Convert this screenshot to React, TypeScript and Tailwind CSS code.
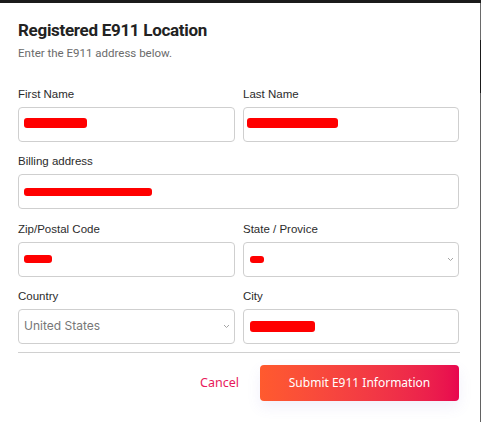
import { ReactNode } from "react";

function Blob({ w, h = 9 }: { w: number; h?: number }) {
  return (
    <span
      className="inline-block rounded-[3px] bg-[#ff0000]"
      style={{ width: w, height: h }}
    />
  );
}

function Chevron() {
  return (
    <svg width="7" height="5" viewBox="0 0 7 5" className="ml-auto shrink-0">
      <path d="M1 1l2.5 2.5L6 1" fill="none" stroke="#9a9a9a" strokeWidth="0.9" />
    </svg>
  );
}

function Field({ label, children, className = "" }: { label: string; children: ReactNode; className?: string }) {
  return (
    <div className={`flex flex-col ${className}`}>
      <label className="text-[11.5px] leading-4 text-[#2b2b2b] font-['Liberation_Sans',Arial,sans-serif]">
        {label}
      </label>
      <div className="mt-[5px] flex h-[35px] items-center rounded-[4px] border border-[#cfcfcf] bg-white pl-[5px] pr-[4px]">
        {children}
      </div>
    </div>
  );
}

export default function App() {
  return (
    <div className="flex h-[422px] w-[481px] flex-col overflow-hidden bg-white">
      <div className="h-[3px] shrink-0 bg-[#1b1b1b]" />
      <div className="flex flex-1">
        <div className="flex-1 pl-[18px] pr-[20px] pt-[15px]">
          <h1 className="text-[17px] leading-6 font-bold text-[#222] font-['Roboto',sans-serif] tracking-[-0.3px]">
            Registered E911 Location
          </h1>
          <p className="mt-[3px] text-[11.5px] leading-4 text-[#6b6b6b] font-['Roboto',sans-serif]">
            Enter the E911 address below.
          </p>

          <div className="mt-[25px] grid grid-cols-[217px_216px] gap-x-[8px] gap-y-[11.33px]">
            <Field label="First Name">
              <span className="-mt-[4px] flex">
                <Blob w={63} h={10} />
              </span>
            </Field>
            <Field label="Last Name">
              <span className="-ml-[2px] -mt-[3px] flex">
                <Blob w={91} h={10} />
              </span>
            </Field>
            <Field label="Billing address" className="col-span-2">
              <span className="flex">
                <Blob w={128} h={8} />
              </span>
            </Field>
            <Field label="Zip/Postal Code">
              <span className="flex">
                <Blob w={28} h={8} />
              </span>
            </Field>
            <Field label="State / Provice">
              <span className="ml-[1px] flex">
                <Blob w={14} h={7} />
              </span>
              <Chevron />
            </Field>
            <Field label="Country">
              <span className="text-[12px] text-[#777] font-['Inter',sans-serif]">United States</span>
              <Chevron />
            </Field>
            <Field label="City">
              <span className="ml-[1px] flex">
                <Blob w={65} h={11} />
              </span>
            </Field>
          </div>

          <div className="mt-[8px] h-px w-[442px] bg-[#d0d0d0]" />

          <div className="mt-[12px] flex w-[441px] items-center justify-end">
            <button className="mr-[21px] text-[12.5px] text-[#e8195a] font-['Noto_Sans',sans-serif]">
              Cancel
            </button>
            <button className="h-[36px] w-[199px] rounded-[4px] bg-gradient-to-r from-[#ff5a2e] to-[#e8064f] text-[12px] text-white font-['Noto_Sans',sans-serif] shadow-[0_6px_14px_rgba(120,110,220,0.10)]">
              Submit E911 Information
            </button>
          </div>
        </div>
        <div className="flex w-[2px] shrink-0 flex-col">
          <div className="h-[37px] bg-[#6a6a6a]" />
          <div className="h-[53px] bg-[#1a1a1a]" />
          <div className="flex-1 bg-[#626262]" />
        </div>
      </div>
    </div>
  );
}
